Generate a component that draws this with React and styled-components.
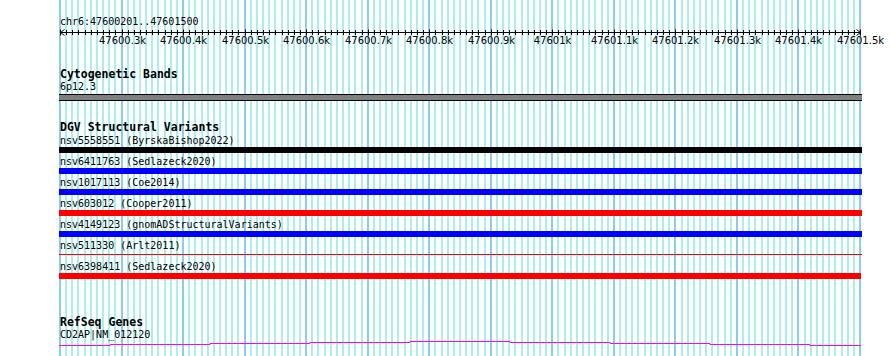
import React from 'react'
import styled, { createGlobalStyle } from 'styled-components'

const START = 47600200
const BP = 1300
const PX = 800
const pxPerBp = PX / BP
const mono = `"DejaVu Sans Mono", "Liberation Mono", monospace`
const sans = `"DejaVu Sans", "Liberation Sans", sans-serif`

const GlobalStyle = createGlobalStyle`
  html, body {
    margin: 0;
    padding: 0;
    background: #fff;
  }
  body {
    width: 890px;
    height: 356px;
    overflow: hidden;
  }
`

const Browser = styled.div`
  height: 356px;
  padding-left: 59px;
`

// the grey/cyan grid behind every track: minor line each 10bp, major each 100bp
const Tracks = styled.div`
  width: 803px;
  height: 100%;
  display: flex;
  flex-direction: column;
  background-image:
    repeating-linear-gradient(to right, #88ccee 0 2px, transparent 2px ${PX / 13}px),
    repeating-linear-gradient(to right, #aaeeee 0 2px, transparent 2px ${PX / 130}px);
  background-size: 802px 100%;
  background-position: 0 0;
  background-repeat: no-repeat;
`

const Ruler = styled.div`
  padding-top: 16px;
  height: 32px;
`

const Location = styled.div`
  font: 10px/12px ${mono};
  color: #000;
  padding-left: 1px;
`

const Axis = styled.svg`
  display: block;
  width: 803px;
  height: 20px;
  overflow: visible;

  text {
    font-family: ${sans};
    font-size: 10px;
    fill: #000;
  }
`

const Track = styled.section`
  margin-top: ${p => p.$gap}px;
`

const TrackTitle = styled.h3`
  margin: 0 0 ${p => p.$after || 0}px;
  padding-left: 1px;
  font: bold 11.5px/13px ${mono};
  color: #000;
`

const FeatureRow = styled.div`
  padding-bottom: 3px;
`

const FeatureLabel = styled.div`
  padding-left: 1px;
  font: 10px/12px ${mono};
  color: #000;
  white-space: nowrap;
`

const Bar = styled.div`
  width: ${p => p.$width || 803}px;
  height: 6px;
  background: ${p =>
    p.$thin
      ? `linear-gradient(transparent 2px, ${p.$color} 2px 3px, transparent 3px)`
      : p.$color};
`

const Band = styled.div`
  margin-top: 1px;
  width: 803px;
  height: 5px;
  background: #808080;
  border-top: 1px solid #000;
  border-bottom: 1px solid #000;
`

const GeneLine = styled.svg`
  display: block;
  width: 803px;
  height: 6px;
`

const variants = [
  { id: 'nsv5558551', src: 'ByrskaBishop2022', color: '#000000' },
  { id: 'nsv6411763', src: 'Sedlazeck2020', color: '#0000ff' },
  { id: 'nsv1017113', src: 'Coe2014', color: '#0000ff' },
  { id: 'nsv603012', src: 'Cooper2011', color: '#ff0000' },
  { id: 'nsv4149123', src: 'gnomADStructuralVariants', color: '#0000ff' },
  { id: 'nsv511330', src: 'Arlt2011', color: '#ff0000', thin: true },
  { id: 'nsv6398411', src: 'Sedlazeck2020', color: '#ff0000', width: 802 },
]

function RulerAxis() {
  const ticks = []
  for (let i = 0; i <= BP / 10; i++) {
    const x = Math.round(1 + i * 10 * pxPerBp) + 0.5
    const major = i % 10 === 0
    ticks.push(
      <line key={'t' + i} x1={x} x2={x} y1={major ? 1.5 : 2} y2={major ? 7.5 : 7} stroke="#000" />
    )
    if (major && i > 0) {
      const v = (START + i * 10) / 1000
      ticks.push(
        <text key={'l' + i} x={x} y={16} textAnchor="middle">
          {v}k
        </text>
      )
    }
  }
  return (
    <Axis viewBox="0 0 803 20">
      <line x1={1} x2={801} y1={4.5} y2={4.5} stroke="#000" />
      <polyline points="5.5,1.5 1.5,4.5 5.5,7.5" fill="none" stroke="#000" />
      <polyline points="797.5,1.5 801.5,4.5 797.5,7.5" fill="none" stroke="#000" />
      {ticks}
    </Axis>
  )
}

function Gene() {
  const steps = [4, 3, 2, 1, 0, 1, 2, 3, 4]
  const pts = []
  steps.forEach((dy, i) => {
    const x1 = i === 0 ? 0 : 51 + (i - 1) * 100
    const x2 = i === steps.length - 1 ? 802 : 51 + i * 100
    pts.push(`${x1},${dy + 0.5}`, `${x2},${dy + 0.5}`)
  })
  return (
    <GeneLine viewBox="0 0 803 6">
      <polyline points={pts.join(' ')} fill="none" stroke="#ff00ff" strokeWidth="1" />
    </GeneLine>
  )
}

export default function App() {
  return (
    <>
      <GlobalStyle />
      <Browser>
        <Tracks>
          <Ruler>
            <Location>chr6:47600201..47601500</Location>
            <RulerAxis />
          </Ruler>

          <Track $gap={20}>
            <TrackTitle>Cytogenetic Bands</TrackTitle>
            <FeatureLabel>6p12.3</FeatureLabel>
            <Band />
          </Track>

          <Track $gap={20}>
            <TrackTitle $after={1}>DGV Structural Variants</TrackTitle>
            {variants.map(v => (
              <FeatureRow key={v.id}>
                <FeatureLabel>
                  {v.id} ({v.src})
                </FeatureLabel>
                <Bar $color={v.color} $thin={v.thin} $width={v.width} />
              </FeatureRow>
            ))}
          </Track>

          <Track $gap={34}>
            <TrackTitle>RefSeq Genes</TrackTitle>
            <FeatureLabel>CD2AP|NM_012120</FeatureLabel>
            <Gene />
          </Track>
        </Tracks>
      </Browser>
    </>
  )
}
